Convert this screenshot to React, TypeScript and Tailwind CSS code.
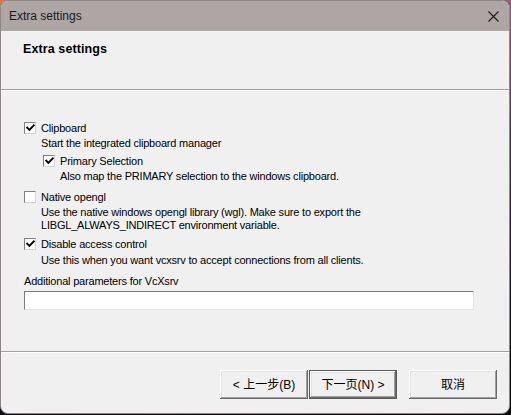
import React from "react";

const Check = ({ checked }: { checked: boolean }) => (
  <span className="w-[12px] h-[12px] shrink-0 bg-white border border-t-[#808080] border-l-[#808080] border-b-[#d4d4d4] border-r-[#d4d4d4] flex items-center justify-center">
    {checked && (
      <svg width="9" height="8" viewBox="0 0 9 8">
        <path d="M1.2 3.6 L3.4 5.9 L7.8 1.4" stroke="#000" strokeWidth="1.9" fill="none" strokeLinecap="square" />
      </svg>
    )}
  </span>
);

const Row = ({ checked, label, className = "" }: { checked: boolean; label: string; className?: string }) => (
  <div className={"flex items-start h-[13px] " + className}>
    <Check checked={checked} />
    <span className="ml-[5px] leading-[13px]">{label}</span>
  </div>
);

const btnBase =
  "w-[88px] h-[29px] flex items-center justify-center text-[12px] text-black bg-[#f0f0f0] font-['Liberation_Sans','Noto_Sans_CJK_SC',sans-serif]";

export default function App() {
  return (
    <div className="w-[511px] h-[415px] overflow-hidden bg-[linear-gradient(170deg,#d9784c_0%,#8a5a78_20%,#4a3050_45%,#141018_75%,#050507_100%)]">
      <div className="w-[510px] h-[414px] rounded-[8px] overflow-hidden border border-[#8c8687] bg-[#f0f0f0] flex flex-col font-['Liberation_Sans',Arial,sans-serif] text-[11px] tracking-[-0.2px] text-black">
        {/* title bar */}
        <div className="h-[30px] shrink-0 bg-[#aea5a5] flex items-center justify-between pl-[8px] pr-[10px]">
          <span className="text-[12px] tracking-normal text-[#1a1a1a]">Extra settings</span>
          <svg width="11" height="11" viewBox="0 0 11 11">
            <path d="M0.5 0.5 L10.5 10.5 M10.5 0.5 L0.5 10.5" stroke="#1a1a1a" strokeWidth="1.1" />
          </svg>
        </div>
        {/* header */}
        <div className="h-[58px] shrink-0 pl-[22px] pt-[12px]">
          <div className="text-[12.5px] font-bold leading-[13px] tracking-[0.1px]">Extra settings</div>
        </div>
        <div className="h-[1px] bg-[#a0a0a0]" />
        <div className="h-[1px] bg-white" />
        {/* content */}
        <div className="h-[260px] shrink-0 pl-[23px] pt-[31px] flex flex-col">
          <Row checked label="Clipboard" />
          <div className="mt-[2px] ml-[17px] leading-[13px]">Start the integrated clipboard manager</div>
          <Row checked label="Primary Selection" className="mt-[5px] ml-[19px]" />
          <div className="mt-[2px] ml-[36px] leading-[13px]">Also map the PRIMARY selection to the windows clipboard.</div>
          <Row checked={false} label="Native opengl" className="mt-[8px]" />
          <div className="mt-[2px] ml-[17px] leading-[13px]">
            Use the native windows opengl library (wgl). Make sure to export the
            <br />
            LIBGL_ALWAYS_INDIRECT environment variable.
          </div>
          <Row checked label="Disable access control" className="mt-[6px]" />
          <div className="mt-[3px] ml-[17px] leading-[13px]">Use this when you want vcxsrv to accept connections from all clients.</div>
          <div className="mt-[8px] leading-[13px]">Additional parameters for VcXsrv</div>
          <div className="mt-[3px] w-[450px] h-[19px] bg-white border border-t-[#7a7a7a] border-l-[#7a7a7a] border-b-[#e3e3e3] border-r-[#e3e3e3]" />
        </div>
        <div className="h-[1px] bg-[#a0a0a0]" />
        <div className="h-[1px] bg-white" />
        {/* buttons */}
        <div className="flex-1 flex justify-end items-start pt-[17px] pr-[12px] tracking-normal">
          <div className={btnBase + " shadow-[inset_-1px_-1px_#696969,inset_1px_1px_#ffffff,inset_-2px_-2px_#a0a0a0,inset_2px_2px_#e3e3e3]"}>
            &lt; 上一步(B)
          </div>
          <div className={btnBase + " ml-[1px] border border-[#5a5a5a] shadow-[inset_-1px_-1px_#696969,inset_1px_1px_#ffffff,inset_-2px_-2px_#a0a0a0,inset_2px_2px_#e3e3e3]"}>
            下一页(N) &gt;
          </div>
          <div className={btnBase + " ml-[12px] shadow-[inset_-1px_-1px_#696969,inset_1px_1px_#ffffff,inset_-2px_-2px_#a0a0a0,inset_2px_2px_#e3e3e3]"}>
            取消
          </div>
        </div>
      </div>
    </div>
  );
}
